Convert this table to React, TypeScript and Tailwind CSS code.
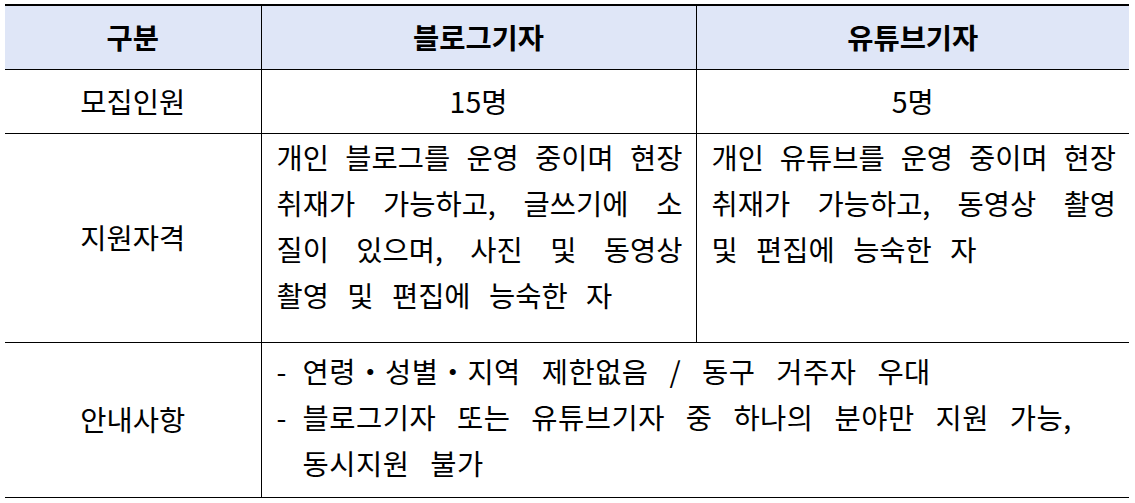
const font = { fontFamily: '"Noto Sans CJK KR", "Noto Sans", sans-serif' };

const JustifiedLines = ({ lines }: { lines: string[] }) => (
  <div className="leading-[46px]">
    {lines.map((line, i) => (
      <div
        key={i}
        className={
          i < lines.length - 1
            ? "whitespace-nowrap text-justify [text-align-last:justify]"
            : "whitespace-nowrap text-left [word-spacing:12px]"
        }
      >
        {line}
      </div>
    ))}
  </div>
);

export default function App() {
  return (
    <div className="bg-white w-[1135px] h-[503px] pt-[4px] pl-[5px] text-black" style={font}>
      <table className="w-[1124px] table-fixed border-collapse text-[28.5px]">
        <colgroup>
          <col className="w-[256px]" />
          <col className="w-[435px]" />
          <col className="w-[433px]" />
        </colgroup>
        <tbody>
          <tr className="h-[64px] bg-[#dfe6f7] border-t-2 border-black">
            <th className="font-bold text-center border-r border-black">구분</th>
            <th className="font-bold text-center border-r border-black">블로그기자</th>
            <th className="font-bold text-center">유튜브기자</th>
          </tr>
          <tr className="h-[64px] border-t border-black">
            <td className="text-center border-r border-black">모집인원</td>
            <td className="text-center border-r border-black">15명</td>
            <td className="text-center">5명</td>
          </tr>
          <tr className="h-[209px] border-t border-black">
            <td className="text-center border-r border-black">지원자격</td>
            <td className="align-top pl-[15px] pr-[13px] pt-0 border-r border-black">
              <JustifiedLines
                lines={[
                  "개인 블로그를 운영 중이며 현장",
                  "취재가 가능하고, 글쓰기에 소",
                  "질이 있으며, 사진 및 동영상",
                  "촬영 및 편집에 능숙한 자",
                ]}
              />
            </td>
            <td className="align-top pl-[15px] pr-[13px] pt-0">
              <JustifiedLines
                lines={[
                  "개인 유튜브를 운영 중이며 현장",
                  "취재가 가능하고, 동영상 촬영",
                  "및 편집에 능숙한 자",
                ]}
              />
            </td>
          </tr>
          <tr className="h-[155px] border-y border-black">
            <td className="text-center border-r border-black">안내사항</td>
            <td colSpan={2} className="pl-[15px] pr-[13px]">
              <div className="leading-[46px] [word-spacing:14px] tracking-[0.5px] whitespace-nowrap -mt-[6px]">
                <div className="flex">
                  <span className="w-[26px] shrink-0">-</span>
                  <span>연령・성별・지역 제한없음 / 동구 거주자 우대</span>
                </div>
                <div className="flex">
                  <span className="w-[26px] shrink-0">-</span>
                  <span>블로그기자 또는 유튜브기자 중 하나의 분야만 지원 가능,</span>
                </div>
                <div className="pl-[26px]">동시지원 불가</div>
              </div>
            </td>
          </tr>
        </tbody>
      </table>
    </div>
  );
}
